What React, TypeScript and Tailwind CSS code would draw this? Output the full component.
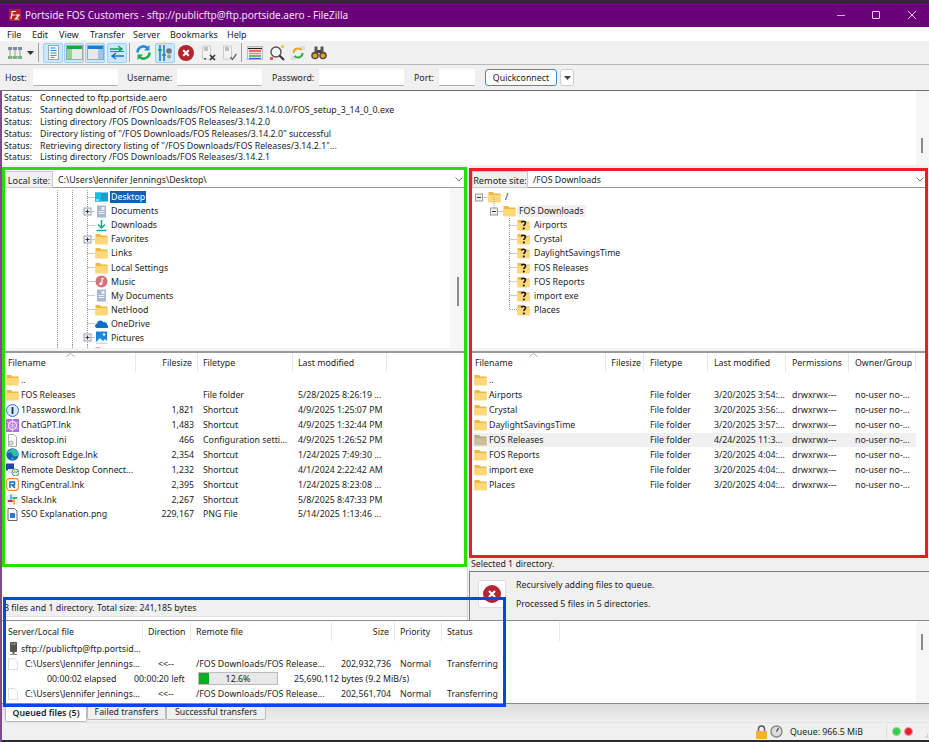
import React from "react";

const Folder = ({ gray = false }: { gray?: boolean }) => (
  <svg width="13" height="12" viewBox="0 0 13 12" className="shrink-0">
    <path d="M0.5 1h4.5l1.5 1.5h6v8.5h-12z" fill={gray ? "#b5aa7a" : "#f0b840"} />
    <path d="M0.5 4h12v7.5h-12z" fill={gray ? "#c9c09a" : "#fdd878"} />
  </svg>
);
const QFolder = () => (
  <svg width="13" height="12" viewBox="0 0 13 12" className="shrink-0">
    <path d="M0.5 1h4.5l1.5 1.5h6v8.5h-12z" fill="#f0b840" />
    <path d="M0.5 3.500h12v8h-12z" fill="#fdd878" />
    <path d="M4.500 3.500c.3-1.600 3.800-1.800 4 .4.100 1.400-1.700 1.700-1.700 3.200" stroke="#111" strokeWidth="1.600" fill="none" />
    <rect x="5.900" y="8.600" width="1.800" height="1.800" fill="#111" />
  </svg>
);
const IDesktop = () => (
  <svg width="13" height="12" viewBox="0 0 13 12" className="shrink-0">
    <rect x="0" y="1.500" width="13" height="9" fill="#1b9bd1" />
    <rect x="0" y="1.500" width="6" height="9" fill="#12c2e8" />
    <rect x="1" y="8.500" width="3" height="1" fill="#fff" />
  </svg>
);
const IDoc = () => (
  <svg width="13" height="13" viewBox="0 0 13 13" className="shrink-0">
    <rect x="2" y="0.500" width="9" height="12" fill="#a9b8cf" />
    <rect x="6.500" y="2" width="3" height="3" fill="#eef2f7" />
    <path d="M3.500 6.500h6M3.500 8.500h6" stroke="#eef2f7" />
  </svg>
);
const IDownload = () => (
  <svg width="13" height="13" viewBox="0 0 13 13" className="shrink-0">
    <path d="M6.500 1v8M3 5.500l3.500 3.500L10 5.500" stroke="#11a884" strokeWidth="1.500" fill="none" />
    <path d="M1.500 11.500h10" stroke="#11a884" strokeWidth="1.400" />
  </svg>
);
const IMusic = () => (
  <svg width="13" height="13" viewBox="0 0 13 13" className="shrink-0">
    <circle cx="6.500" cy="6.500" r="6" fill="#d4707c" />
    <path d="M7 3v5.500" stroke="#fff" strokeWidth="1.200" />
    <path d="M7 3l2 1" stroke="#fff" />
    <circle cx="5.700" cy="8.700" r="1.500" fill="#fff" />
  </svg>
);
const ICloud = () => (
  <svg width="13" height="12" viewBox="0 0 13 12" className="shrink-0">
    <path d="M1.500 10a2.300 2.300 0 0 1 .4-4.400 3.600 3.600 0 0 1 6.600-1.400 2.900 2.900 0 0 1 3.700 2.900A1.500 1.500 0 0 1 12 10z" fill="#0f6fc6" />
  </svg>
);
const IPictures = () => (
  <svg width="13" height="13" viewBox="0 0 13 13" className="shrink-0">
    <rect x="1" y="0.500" width="11" height="12" fill="#1a86d9" />
    <path d="M1 11l4-4 3 3 2-2 2 2v2.500H1z" fill="#e8f3fc" />
    <circle cx="9" cy="3.500" r="1.200" fill="#e8f3fc" />
  </svg>
);
const I1P = () => (
  <svg width="13" height="13" viewBox="0 0 13 13" className="shrink-0">
    <circle cx="6.500" cy="6.500" r="6" fill="#dbe7fb" stroke="#3b73d9" />
    <rect x="5.600" y="3" width="1.800" height="7" rx="0.600" fill="#15315e" />
  </svg>
);
const IGpt = () => (
  <svg width="13" height="13" viewBox="0 0 13 13" className="shrink-0">
    <rect width="13" height="13" fill="#b06fd6" />
    <circle cx="6.500" cy="6.500" r="4" fill="none" stroke="#f0dcf8" strokeWidth="1.400" />
    <path d="M1 3l11 7M1 10l11-7M6.500 0v13" stroke="#e7cdf4" strokeWidth="0.900" />
  </svg>
);
const IIni = () => (
  <svg width="13" height="13" viewBox="0 0 13 13" className="shrink-0">
    <path d="M2.500 0.500h5.500l2.500 2.500v9.500h-8z" fill="#fafafa" stroke="#aaa" />
    <circle cx="5" cy="9" r="2.500" fill="#bbb" />
    <circle cx="5" cy="9" r="1" fill="#fafafa" />
  </svg>
);
const IEdge = () => (
  <svg width="13" height="13" viewBox="0 0 13 13" className="shrink-0">
    <circle cx="6.500" cy="6.500" r="6.200" fill="#0f62ac" />
    <path d="M.6 7.500C1 3.500 4 1 7 1c3.200 0 5.500 2.300 5.500 5 0 2-2 2.500-3.500 2.500-1.500 0-2.500-.6-2.500-1.500 0-1-1-3-3.300-2.500C1.500 5.200.8 6.200.6 7.500z" fill="#2fc0a0" />
    <circle cx="6.500" cy="10.500" r="1.500" fill="#1b9de2" />
  </svg>
);
const IRdp = () => (
  <svg width="13" height="13" viewBox="0 0 13 13" className="shrink-0">
    <rect x="0" y="0.500" width="8" height="7" fill="#2742a8" />
    <rect x="2" y="6" width="8" height="4" fill="#dbe4f4" />
    <circle cx="9.500" cy="9.500" r="3.500" fill="#eaf3ea" stroke="#4d9a57" />
    <path d="M7.500 10l1.500-1.500 1 1L12 8" stroke="#3d8a47" fill="none" />
  </svg>
);
const IRing = () => (
  <svg width="13" height="13" viewBox="0 0 13 13" className="shrink-0">
    <rect x="0.700" y="0.700" width="11.600" height="11.600" rx="2.500" fill="#fff" stroke="#f28c38" strokeWidth="1.200" />
    <path d="M4 10V4h4.500v3H6l3 3" stroke="#0b6fc2" strokeWidth="1.500" fill="none" />
  </svg>
);
const ISlack = () => (
  <svg width="13" height="13" viewBox="0 0 13 13" className="shrink-0">
    <circle cx="6.500" cy="6.500" r="6.200" fill="#eee" />
    <path d="M5 2.500v3.500" stroke="#3cb9e0" strokeWidth="1.800" strokeLinecap="round" />
    <path d="M7 5h3.500" stroke="#2eb67d" strokeWidth="1.800" strokeLinecap="round" />
    <path d="M8 7v3.500" stroke="#ecb22e" strokeWidth="1.800" strokeLinecap="round" />
    <path d="M2.500 8H6" stroke="#e01e5a" strokeWidth="1.800" strokeLinecap="round" />
  </svg>
);
const IPng = () => (
  <svg width="13" height="13" viewBox="0 0 13 13" className="shrink-0">
    <path d="M2 0.500h6.500l2.500 2.500v9.500h-9z" fill="#fff" stroke="#666" />
    <rect x="4" y="5" width="5" height="5" fill="#2a7bd1" />
  </svg>
);
const IBlank = () => (
  <svg width="10" height="12" viewBox="0 0 10 12" className="shrink-0">
    <path d="M.5.500h6l3 3v8h-9z" fill="#fff" stroke="#ddd" />
  </svg>
);
const IServer = () => (
  <svg width="9" height="13" viewBox="0 0 9 13" className="shrink-0">
    <rect x="1" y="0" width="7" height="10" rx="1" fill="#555" />
    <rect x="2" y="1.500" width="5" height="1" fill="#8ab87a" />
    <rect x="3.500" y="10" width="2" height="2" fill="#666" />
    <rect x="1" y="12" width="7" height="1" fill="#888" />
  </svg>
);

const Connector = ({ plus = false }: { plus?: boolean }) => (
  <svg width="38" height="15" viewBox="0 0 38 15" className="shrink-0 overflow-visible">
    <path d="M.5 0v15M15.500 0v15M30.500 0v15M30.500 7.500H38" stroke="#999" strokeDasharray="1 1" fill="none" />
    {plus && (
      <g>
        <rect x="27" y="4" width="7" height="7" fill="#eef0f5" stroke="#9aa0ad" />
        <path d="M28.500 7.500h4M30.500 5.500v4" stroke="#334" />
      </g>
    )}
  </svg>
);

const localTree: { n: string; i: React.ReactNode; p?: boolean; s?: boolean }[] = [
  { n: "Desktop", i: <IDesktop />, s: true },
  { n: "Documents", i: <IDoc />, p: true },
  { n: "Downloads", i: <IDownload /> },
  { n: "Favorites", i: <Folder />, p: true },
  { n: "Links", i: <Folder /> },
  { n: "Local Settings", i: <Folder /> },
  { n: "Music", i: <IMusic /> },
  { n: "My Documents", i: <IDoc /> },
  { n: "NetHood", i: <Folder /> },
  { n: "OneDrive", i: <ICloud /> },
  { n: "Pictures", i: <IPictures />, p: true },
  { n: "", i: <Folder /> },
];

const localFiles: [React.ReactNode, string, string, string, string][] = [
  [<Folder />, "..", "", "", ""],
  [<Folder />, "FOS Releases", "", "File folder", "5/28/2025 8:26:19 ..."],
  [<I1P />, "1Password.lnk", "1,821", "Shortcut", "4/9/2025 1:25:07 PM"],
  [<IGpt />, "ChatGPT.lnk", "1,483", "Shortcut", "4/9/2025 1:32:44 PM"],
  [<IIni />, "desktop.ini", "466", "Configuration setti...", "4/9/2025 1:26:52 PM"],
  [<IEdge />, "Microsoft Edge.lnk", "2,354", "Shortcut", "1/24/2025 7:49:30 ..."],
  [<IRdp />, "Remote Desktop Connect...", "1,232", "Shortcut", "4/1/2024 2:22:42 AM"],
  [<IRing />, "RingCentral.lnk", "2,395", "Shortcut", "1/24/2025 8:23:08 ..."],
  [<ISlack />, "Slack.lnk", "2,267", "Shortcut", "5/8/2025 8:47:33 PM"],
  [<IPng />, "SSO Explanation.png", "229,167", "PNG File", "5/14/2025 1:13:46 ..."],
];

const remoteFiles: [string, string, string][] = [
  ["..", "", ""],
  ["Airports", "File folder", "3/20/2025 3:54:..."],
  ["Crystal", "File folder", "3/20/2025 3:56:..."],
  ["DaylightSavingsTime", "File folder", "3/20/2025 3:57:..."],
  ["FOS Releases", "File folder", "4/24/2025 11:3..."],
  ["FOS Reports", "File folder", "3/20/2025 4:04:..."],
  ["import exe", "File folder", "3/20/2025 4:04:..."],
  ["Places", "File folder", "3/20/2025 4:04:..."],
];

const Head = ({ w, t, right = false }: { w: string; t: string; right?: boolean }) => (
  <div className={`${w} h-[19px] shrink-0 flex items-center px-[5px] border-r border-[#e8e8e8] whitespace-nowrap ${right ? "justify-end" : ""}`}>{t}</div>
);

const SortMark = () => (
  <svg width="9" height="4" viewBox="0 0 9 4" className="block">
    <path d="M.5 3.500L4.500.500l4 3" stroke="#aaa" fill="none" />
  </svg>
);

const TB = ({ on = false, children, ml = "" }: { on?: boolean; children: React.ReactNode; ml?: string }) => (
  <div className={`w-[20px] h-[20px] shrink-0 flex items-center justify-center rounded-[2px] border ${ml} ${on ? "bg-[#cce8ff] border-[#99d1ff]" : "border-transparent"}`}>{children}</div>
);
const Sep = ({ ml = "" }: { ml?: string }) => <div className={`w-px h-[19px] bg-[#a0a0a0] shrink-0 ${ml}`} />;

const Labeled = ({ label, lw, iw, ml = "" }: { label: string; lw: string; iw: string; ml?: string }) => (
  <div className={`flex items-center ${ml}`}>
    <div className={lw}>{label}</div>
    <div className={`${iw} h-[17px] bg-white border-b border-[#b0b0b0] rounded-[1px]`} />
  </div>
);

const SiteRow = ({ label, path, lw }: { label: string; path: string; lw: string }) => (
  <div className="h-[18px] pt-[1px] flex shrink-0">
    <div className={`${lw} shrink-0 bg-[#f0f0f0] border border-[#c8c8c8] flex items-center justify-center whitespace-nowrap pt-[2px] text-[9.2px]`}>{label}</div>
    <div className="flex-1 bg-white border-b border-[#999] flex items-center pl-[5px] pt-[2px]">{path}</div>
    <div className="w-[14px] bg-white border-b border-[#999] flex items-center justify-end pr-[1px]">
      <svg width="8" height="5" viewBox="0 0 8 5"><path d="M.5.500L4 4l3.500-3.500" stroke="#777" fill="none" /></svg>
    </div>
  </div>
);

const RemoteConn = ({ kind }: { kind: "root" | "dir" | "leaf" | "last" }) => {
  if (kind === "root" || kind === "dir")
    return (
      <svg width="16" height="15" viewBox="0 0 16 15" className="shrink-0 overflow-visible">
        {kind === "dir" && <path d="M7 -7v11" stroke="#999" strokeDasharray="1 1" />}
        <path d="M10.500 7.500h5.500" stroke="#999" strokeDasharray="1 1" />
        <rect x="3.500" y="4" width="7" height="7" fill="#eee" stroke="#9a9a9a" />
        <path d="M5 7.500h4" stroke="#334" />
      </svg>
    );
  return (
    <svg width="8" height="15" viewBox="0 0 8 15" className="shrink-0 overflow-visible">
      <path d={kind === "leaf" ? "M.5 0v15M.5 7.500H8" : "M.5 0v7.500H8"} stroke="#999" strokeDasharray="1 1" fill="none" />
    </svg>
  );
};

export default function App() {
  return (
    <div className="w-[929px] h-[742px] overflow-hidden relative flex flex-col bg-[#f0f0f0] text-[#1c1c1c] text-[8.8px] leading-[12px] font-['Noto_Sans',sans-serif]">
      <div className="h-[3px] bg-[#2b2b2b] shrink-0" />
      {/* title */}
      <div className="h-[24px] bg-[#6a007a] flex items-center shrink-0 pl-[9px] pr-[13px] text-[#f0e4f2] text-[10px]">
        <svg width="12" height="12" viewBox="0 0 12 12" className="shrink-0">
          <rect width="12" height="12" rx="1" fill="#b3212b" />
          <path d="M2 10l1.200-7.500h3.500M2.700 6h3M6.500 6h3.500L6.500 10h3.500" stroke="#fff" strokeWidth="1.200" fill="none" />
        </svg>
        <div className="ml-[4px] flex-1">Portside FOS Customers - sftp://publicftp@ftp.portside.aero - FileZilla</div>
        <div className="w-[8px] h-px bg-[#cdb5d2] mr-[27px]" />
        <div className="w-[8px] h-[8px] border border-[#e8dcea] rounded-[1px] mr-[28px]" />
        <svg width="8" height="8" viewBox="0 0 8 8" className="shrink-0"><path d="M0 0l8 8M8 0L0 8" stroke="#e8dcea" /></svg>
      </div>
      {/* menu */}
      <div className="h-[14px] bg-white flex items-center pl-[7px] pt-[1px] shrink-0 text-[9px]">
        <div className="w-[25px]">File</div>
        <div className="w-[27px]">Edit</div>
        <div className="w-[31px]">View</div>
        <div className="w-[43px]">Transfer</div>
        <div className="w-[37px]">Server</div>
        <div className="w-[57px]">Bookmarks</div>
        <div>Help</div>
      </div>
      {/* toolbar */}
      <div className="h-[24px] flex items-center pl-[5px] border-b border-[#b8b8b8] shrink-0">
        <TB>
          <svg width="16" height="14" viewBox="0 0 16 14">
            <path d="M1 11h14M3 3v8M8 3v8M13 3v8" stroke="#8fa08f" />
            <rect x="1" y="1" width="4" height="3" fill="#7a8aa5" />
            <rect x="6" y="1" width="4" height="3" fill="#7a8aa5" />
            <rect x="11" y="1" width="4" height="3" fill="#7a8aa5" />
            <rect x="1" y="10" width="4" height="3" fill="#7fae7f" />
            <rect x="6" y="10" width="4" height="3" fill="#7fae7f" />
            <rect x="11" y="10" width="4" height="3" fill="#7fae7f" />
          </svg>
        </TB>
        <svg width="7" height="4" viewBox="0 0 7 4" className="ml-[2px] mr-[4px] shrink-0"><path d="M0 0h7L3.500 4z" fill="#333" /></svg>
        <Sep />
        <TB on ml="ml-[4px]">
          <svg width="13" height="15" viewBox="0 0 13 15">
            <rect x="1.500" y=".5" width="10" height="14" fill="#f5f5f5" stroke="#9aa" />
            <path d="M3.500 3h5M3.500 5.500h6" stroke="#3a7fd0" />
            <path d="M3.500 8h6" stroke="#3aa060" />
            <path d="M3.500 10.500h6M3.500 12.500h4" stroke="#888" />
          </svg>
        </TB>
        <TB on ml="ml-[1px]">
          <svg width="17" height="15" viewBox="0 0 17 15">
            <rect x=".5" y=".5" width="16" height="14" fill="#e6efe6" stroke="#9aa" />
            <rect x="1" y="1" width="15" height="3" fill="#18a84a" />
            <rect x="1" y="4" width="5" height="10" fill="#8fd39a" />
          </svg>
        </TB>
        <TB on ml="ml-[1px]">
          <svg width="17" height="15" viewBox="0 0 17 15">
            <rect x=".5" y=".5" width="16" height="14" fill="#e8e8ec" stroke="#9aa" />
            <rect x="1" y="1" width="15" height="3" fill="#1a7fd0" />
            <rect x="11" y="4" width="5" height="10" fill="#9cc6ea" />
          </svg>
        </TB>
        <TB on ml="ml-[2px]">
          <svg width="16" height="15" viewBox="0 0 16 15">
            <path d="M1 4h11M9 1l4 3-4 3" stroke="#14a050" strokeWidth="1.500" fill="none" />
            <path d="M1 6.500h14" stroke="#14a050" strokeWidth="1" />
            <path d="M15 11H4M7 8l-4 3 4 3" stroke="#1a70c8" strokeWidth="1.500" fill="none" />
          </svg>
        </TB>
        <Sep ml="ml-[2px]" />
        <TB ml="ml-[3px]">
          <svg width="17" height="17" viewBox="0 0 17 17">
            <path d="M2.500 8.500a6 6 0 0 1 10.500-4" stroke="#1d8fd8" strokeWidth="2.600" fill="none" />
            <path d="M14.500 1v5.500H9z" fill="#1d8fd8" />
            <path d="M14.500 8.500a6 6 0 0 1-10.500 4" stroke="#1db04a" strokeWidth="2.600" fill="none" />
            <path d="M2.500 16v-5.500H8z" fill="#1db04a" />
          </svg>
        </TB>
        <TB on ml="ml-[2px]">
          <svg width="16" height="16" viewBox="0 0 16 16">
            <path d="M3 0v16M7 0v16" stroke="#1a70c8" strokeWidth="1.500" />
            <path d="M1 5h4M5 10h4" stroke="#14a050" strokeWidth="1.500" />
            <circle cx="12" cy="6" r="2.800" fill="#777" />
            <circle cx="12" cy="11.500" r="2" fill="#999" />
          </svg>
        </TB>
        <TB ml="ml-[1px]">
          <svg width="16" height="16" viewBox="0 0 16 16">
            <circle cx="8" cy="8" r="8" fill="#b3262f" />
            <path d="M5.200 5.200l5.600 5.600M10.800 5.200l-5.600 5.600" stroke="#fff" strokeWidth="2" />
          </svg>
        </TB>
        <TB ml="ml-[2px]">
          <svg width="17" height="16" viewBox="0 0 17 16">
            <path d="M2.500 1h8v13h-8z" fill="#f4f4f4" stroke="#ccc" />
            <path d="M4 3h4M4 5h4" stroke="#888" />
            <path d="M10 10l5 5M15 10l-5 5" stroke="#333" strokeWidth="1.600" />
            <rect x="4" y="13" width="2" height="1.500" fill="#555" />
          </svg>
        </TB>
        <TB ml="ml-[1px]">
          <svg width="17" height="16" viewBox="0 0 17 16">
            <path d="M2.500 1h8v13h-8z" fill="#f4f4f4" stroke="#ccc" />
            <path d="M4 3h4M4 5h4" stroke="#888" />
            <path d="M9.500 12l2 2.500 4-5.500" stroke="#666" strokeWidth="1.300" fill="none" />
          </svg>
        </TB>
        <Sep ml="ml-[2px]" />
        <TB ml="ml-[3px]">
          <svg width="16" height="14" viewBox="0 0 16 14">
            <rect x=".5" y=".5" width="15" height="13" fill="#f0f0f0" stroke="#bbb" />
            <path d="M1 2.500h14" stroke="#222" strokeWidth="1.200" />
            <path d="M2 5h12" stroke="#e03030" strokeWidth="1.400" />
            <path d="M2 7.500h12" stroke="#e0a020" strokeWidth="1.400" />
            <path d="M2 10h12" stroke="#30a040" strokeWidth="1.400" />
            <path d="M2 12.500h12" stroke="#3060d0" strokeWidth="1.200" />
          </svg>
        </TB>
        <TB ml="ml-[2px]">
          <svg width="17" height="17" viewBox="0 0 17 17">
            <circle cx="7" cy="8" r="5" fill="#f4f4f4" stroke="#555" strokeWidth="1.400" />
            <path d="M10.500 11.500l4.500 4.500" stroke="#333" strokeWidth="2" />
            <path d="M12 1h3v3h-3z" fill="#eecb50" />
            <path d="M1 13h3v3H1z" fill="#e55" />
          </svg>
        </TB>
        <TB ml="ml-[1px]">
          <svg width="16" height="16" viewBox="0 0 16 16">
            <rect x="10" y="1" width="5" height="4" fill="#ddd" />
            <rect x="1" y="11" width="5" height="4" fill="#ddd" />
            <path d="M3.500 8a4.500 4.500 0 0 1 8-2.800" stroke="#e8a820" strokeWidth="2" fill="none" />
            <path d="M12.500 8a4.500 4.500 0 0 1-8 2.800" stroke="#30b040" strokeWidth="2" fill="none" />
          </svg>
        </TB>
        <TB ml="ml-[1px]">
          <svg width="16" height="14" viewBox="0 0 16 14">
            <rect x="3.500" y="0.500" width="3" height="6" fill="#555" />
            <rect x="9.500" y="0.500" width="3" height="6" fill="#555" />
            <rect x="6" y="4" width="4" height="3" fill="#444" />
            <circle cx="4" cy="9.500" r="3.800" fill="#554a3a" />
            <circle cx="12" cy="9.500" r="3.800" fill="#554a3a" />
            <circle cx="4" cy="9.800" r="2.300" fill="#e0a030" />
            <circle cx="12" cy="9.800" r="2.300" fill="#e0a030" />
          </svg>
        </TB>
      </div>
      {/* quickconnect */}
      <div className="h-[26px] flex items-center pl-[5px] border-b border-[#707070] shrink-0">
        <Labeled label="Host:" lw="w-[28px]" iw="w-[85px]" />
        <Labeled label="Username:" lw="w-[50px]" iw="w-[85px]" ml="ml-[9px]" />
        <Labeled label="Password:" lw="w-[47px]" iw="w-[85px]" ml="ml-[10px]" />
        <Labeled label="Port:" lw="w-[25px]" iw="w-[36px]" ml="ml-[10px]" />
        <div className="ml-[10px] w-[72px] h-[17px] bg-white border border-[#2f8fe0] rounded-[3px] flex items-center justify-center">Quickconnect</div>
        <div className="ml-[3px] w-[14px] h-[17px] bg-white border border-[#ccc] rounded-[3px] flex items-center justify-center">
          <svg width="7" height="4" viewBox="0 0 7 4"><path d="M0 0h7L3.500 4z" fill="#444" /></svg>
        </div>
      </div>
      {/* main area with window edge */}
      <div className="flex-1 min-h-0 flex flex-col border-l-2 border-[#7d4d86]">
        {/* log */}
        <div className="h-[74px] bg-white flex shrink-0">
          <div className="flex-1 pl-[2px] pt-[1px]">
            {[
              "Connected to ftp.portside.aero",
              "Starting download of /FOS Downloads/FOS Releases/3.14.0.0/FOS_setup_3_14_0_0.exe",
              "Listing directory /FOS Downloads/FOS Releases/3.14.2.0",
              'Directory listing of "/FOS Downloads/FOS Releases/3.14.2.0" successful',
              'Retrieving directory listing of "/FOS Downloads/FOS Releases/3.14.2.1"...',
              "Listing directory /FOS Downloads/FOS Releases/3.14.2.1",
            ].map((m) => (
              <div key={m} className="flex h-[11.9px] items-center">
                <div className="w-[36px] shrink-0">Status:</div>
                <div>{m}</div>
              </div>
            ))}
          </div>
          <div className="w-[13px] bg-[#f6f6f6] pl-[5px] pt-[47px] shrink-0">
            <div className="w-[2px] h-[15px] bg-[#8a8a8a]" />
          </div>
        </div>
        {/* panels */}
        <div className="h-[455px] flex shrink-0 pt-[2px]">
          {/* left */}
          <div className="w-[466px] shrink-0 flex flex-col bg-white border-r border-[#d8d8d8]">
            <div className="h-[400px] shrink-0 border-[3px] border-[#26e000] flex flex-col bg-white">
              <SiteRow label="Local site:" path="C:\Users\Jennifer Jennings\Desktop\" lw="w-[48px]" />
              <div className="h-[160px] flex shrink-0 overflow-hidden">
                <div className="flex-1 pl-[52px] pt-[2px]">
                  {localTree.map((r, k) => (
                    <div key={k} className="flex items-center h-[14.1px]">
                      <Connector plus={r.p} />
                      {r.i}
                      <div className={`ml-[2px] px-[1px] ${r.s ? "bg-[#0a62b4] text-white" : ""}`}>{r.n}</div>
                    </div>
                  ))}
                </div>
                <div className="w-[14px] bg-[#f6f6f6] pl-[7px] pt-[89px] shrink-0">
                  <div className="w-[2px] h-[29px] bg-[#8a8a8a]" />
                </div>
              </div>
              <div className="h-[5px] bg-[#f4f4f4] border-b-2 border-[#9a9a9a] shrink-0" />
              <div className="flex flex-col flex-1 min-h-0">
                <div className="flex shrink-0 h-[19px] mb-[1px]">
                  <div className="w-[131px] h-[19px] shrink-0 border-r border-[#e8e8e8] pl-[3px] flex flex-col">
                    <div className="pl-[58px] h-px"><SortMark /></div>
                    <div className="h-[18px] flex items-center">Filename</div>
                  </div>
                  <Head w="w-[62px]" t="Filesize" right />
                  <Head w="w-[95px]" t="Filetype" />
                  <Head w="w-[94px]" t="Last modified" />
                </div>
                {localFiles.map((f, k) => (
                  <div key={k} className="flex h-[14.9px] items-center shrink-0">
                    <div className="w-[131px] shrink-0 flex items-center pl-[1px] gap-[2px] whitespace-nowrap">{f[0]}<div>{f[1]}</div></div>
                    <div className="w-[62px] shrink-0 text-right pr-[4px]">{f[2]}</div>
                    <div className="w-[95px] shrink-0 pl-[5px] whitespace-nowrap overflow-hidden">{f[3]}</div>
                    <div className="w-[94px] shrink-0 pl-[5px] whitespace-nowrap">{f[4]}</div>
                  </div>
                ))}
              </div>
            </div>
            <div className="flex-1" />
            <div className="h-[17px] bg-[#f0f0f0] flex items-center pl-[2px] mb-[3px] shrink-0 border-b border-[#e0e0e0]">8 files and 1 directory. Total size: 241,185 bytes</div>
          </div>
          {/* right */}
          <div className="flex-1 flex flex-col min-w-0 pl-[1px] pt-[1px]">
            <div className="h-[390px] shrink-0 border-[3px] border-[#ee1c24] mr-[1px] flex flex-col bg-white">
              <div className="-mt-[1px]">
                <SiteRow label="Remote site:" path="/FOS Downloads" lw="w-[56px]" />
              </div>
              <div className="h-[160px] shrink-0 overflow-hidden pt-[2px]">
                <div className="flex items-center h-[14.1px]">
                  <RemoteConn kind="root" />
                  <Folder />
                  <div className="ml-[4px]">/</div>
                </div>
                <div className="flex items-center h-[14.1px] pl-[15px]">
                  <RemoteConn kind="dir" />
                  <Folder />
                  <div className="ml-[1px] px-[2px] bg-[#f0f0f0]">FOS Downloads</div>
                </div>
                {["Airports", "Crystal", "DaylightSavingsTime", "FOS Releases", "FOS Reports", "import exe", "Places"].map((n, k) => (
                  <div key={n} className="flex items-center h-[14.1px] pl-[37px]">
                    <RemoteConn kind={k === 6 ? "last" : "leaf"} />
                    <QFolder />
                    <div className="ml-[4px]">{n}</div>
                  </div>
                ))}
              </div>
              <div className="h-[5px] bg-[#f4f4f4] border-b-2 border-[#9a9a9a] shrink-0" />
              <div className="flex shrink-0 h-[19px] mb-[1px]">
                <div className="w-[134px] h-[19px] shrink-0 border-r border-[#e8e8e8] pl-[3px] flex flex-col">
                  <div className="pl-[54px] h-px"><SortMark /></div>
                  <div className="h-[18px] flex items-center">Filename</div>
                </div>
                <Head w="w-[38px] !px-[2px]" t="Filesize" right />
                <Head w="w-[64px] !px-[6px]" t="Filetype" />
                <Head w="w-[78px] !px-[6px]" t="Last modified" />
                <Head w="w-[63px] !px-[6px]" t="Permissions" />
                <Head w="w-[67px] !px-[6px]" t="Owner/Group" />
              </div>
              {remoteFiles.map((f, k) => (
                <div key={k} className={`flex h-[14.9px] items-center shrink-0 w-[444px] whitespace-nowrap ${k === 4 ? "bg-[#f0f0f0]" : ""}`}>
                  <div className="w-[172px] shrink-0 flex items-center pl-[2px] gap-[2px]"><Folder gray={k === 4} /><div>{f[0]}</div></div>
                  <div className="w-[64px] shrink-0 pl-[6px]">{f[1]}</div>
                  <div className="w-[78px] shrink-0 pl-[6px] overflow-hidden">{f[2]}</div>
                  <div className="w-[63px] shrink-0 pl-[6px]">{k > 0 ? "drwxrwx---" : ""}</div>
                  <div className="w-[67px] shrink-0 pl-[6px]">{k > 0 ? "no-user no-..." : ""}</div>
                </div>
              ))}
            </div>
            <div className="h-[14px] flex items-center pl-[2px] pb-[1px] shrink-0 border-b border-[#808080]">Selected 1 directory.</div>
            <div className="flex-1 border-l border-[#808080] flex pl-[8px] pt-[8px]">
              <div className="w-[28px] h-[28px] bg-white border border-[#ddd] rounded-[2px] flex items-center justify-center shrink-0">
                <svg width="18" height="18" viewBox="0 0 18 18">
                  <circle cx="9" cy="9" r="9" fill="#b3262f" />
                  <path d="M6 6l6 6M12 6l-6 6" stroke="#fff" strokeWidth="2.200" />
                </svg>
              </div>
              <div className="ml-[10px] -mt-[5px] flex flex-col">
                <div className="h-[19px] flex items-center">Recursively adding files to queue.</div>
                <div className="h-[19px] flex items-center">Processed 5 files in 5 directories.</div>
              </div>
            </div>
          </div>
        </div>
        {/* queue */}
        <div className="h-[84px] bg-white border-y border-[#8a8a8a] flex shrink-0">
          <div className="flex-1 min-w-0">
            <div className="flex h-[19px] mt-[1px] mb-[1px] items-stretch">
              <Head w="w-[141px] !pl-[6px]" t="Server/Local file" />
              <Head w="w-[48px]" t="Direction" />
              <Head w="w-[141px]" t="Remote file" />
              <Head w="w-[63px]" t="Size" right />
              <Head w="w-[47px]" t="Priority" />
              <Head w="w-[118px]" t="Status" />
            </div>
            <div className="flex items-center h-[15px] pl-[7px] gap-[3px] -mt-[1px]"><IServer /><div>sftp://publicftp@ftp.portsid...</div></div>
            {[0, 1].map((k) => (
              <React.Fragment key={k}>
                <div className="flex items-center h-[15px] whitespace-nowrap">
                  <div className="w-[141px] pl-[6px] flex items-center gap-[7px] shrink-0"><IBlank /><div>C:\Users\Jennifer Jennings...</div></div>
                  <div className="w-[48px] pl-[15px] shrink-0">{"<<--"}</div>
                  <div className="w-[141px] pl-[5px] shrink-0">/FOS Downloads/FOS Release...</div>
                  <div className="w-[63px] text-right pr-[4px] shrink-0">{k === 0 ? "202,932,736" : "202,561,704"}</div>
                  <div className="w-[47px] pl-[5px] shrink-0">Normal</div>
                  <div className="w-[118px] pl-[5px] shrink-0">Transferring</div>
                </div>
                {k === 0 && (
                  <div className="flex items-center h-[15px] whitespace-nowrap">
                    <div className="w-[132px] pl-[45px] shrink-0">00:00:02 elapsed</div>
                    <div className="w-[64px] shrink-0">00:00:20 left</div>
                    <div className="w-[80px] h-[13px] bg-[#e8e8e8] border border-[#bcbcbc] flex shrink-0">
                      <div className="w-[10px] bg-[#06b025]" />
                      <div className="flex-1 text-center pr-[10px]">12.6%</div>
                    </div>
                    <div className="ml-[16px]">25,690,112 bytes (9.2 MiB/s)</div>
                  </div>
                )}
              </React.Fragment>
            ))}
          </div>
          <div className="w-[13px] bg-[#f6f6f6] pl-[5px] pt-[13px] shrink-0">
            <div className="w-[2px] h-[16px] bg-[#8a8a8a]" />
          </div>
        </div>
        {/* tabs */}
        <div className="h-[19px] flex shrink-0 pl-[3px] bg-gradient-to-b from-[#dcdcdc] to-[#f0f0f0] border-b border-[#e4e4e4]">
          <div className="w-[82px] h-[18px] bg-white border border-t-0 border-[#bbb] rounded-b-[2px] flex items-center justify-center font-semibold">Queued files (5)</div>
          <div className="w-[79px] h-[16px] bg-[#f0f0f0] border border-t-0 border-[#bbb] rounded-b-[2px] flex items-center justify-center">Failed transfers</div>
          <div className="w-[100px] h-[16px] bg-[#f0f0f0] border border-t-0 border-[#bbb] rounded-b-[2px] flex items-center justify-center">Successful transfers</div>
        </div>
        {/* status */}
        <div className="flex-1 flex items-center justify-end">
          <svg width="13" height="14" viewBox="0 0 13 14" className="shrink-0">
            <path d="M3.500 6V4a3 3 0 0 1 6 0v2" stroke="#555" strokeWidth="1.400" fill="none" />
            <rect x="1" y="6" width="11" height="8" fill="#f0b429" />
          </svg>
          <svg width="13" height="13" viewBox="0 0 13 13" className="shrink-0 ml-[2px]">
            <circle cx="6.500" cy="6.500" r="5.500" fill="#ddd" stroke="#888" strokeWidth="1.400" />
            <path d="M6.500 6.500L8.500 3" stroke="#444" strokeWidth="1.300" />
          </svg>
          <div className="ml-[7px] w-[96px]">Queue: 966.5 MiB</div>
          <div className="w-px h-[14px] bg-[#ddd]" />
          <div className="w-[9px] h-[9px] rounded-full bg-[#30d040] ml-[5px] border border-[#9fcfa5]" />
          <div className="w-[9px] h-[9px] rounded-full bg-[#e8202c] ml-[3px] border border-[#e8a0a5]" />
          <svg width="16" height="14" viewBox="0 0 16 14" className="shrink-0">
            <path d="M14 10h1M12 12h1M14 12h1" stroke="#aaa" />
          </svg>
        </div>
        <div className="h-[2px] bg-[#2b2b2b] shrink-0" />
      </div>
      {/* annotation overlay */}
      <div className="absolute left-[3px] top-[597px] w-[503px] h-[110px] border-[3px] border-[#0047e8] pointer-events-none" />
    </div>
  );
}
